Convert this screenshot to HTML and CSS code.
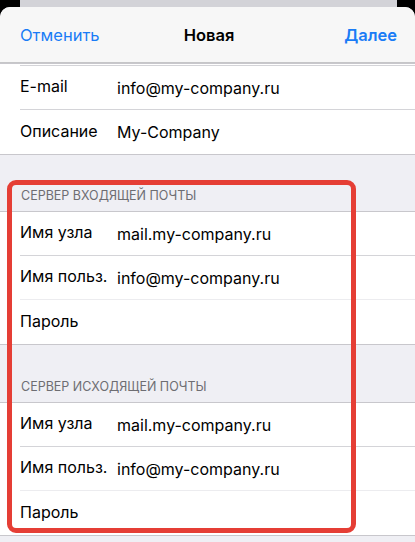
FILE: index.html
```html
<!DOCTYPE html>
<html lang="ru">

<head>
    <meta charset="UTF-8">
    <meta name="viewport" content="width=device-width, initial-scale=1.0">
    <title>Новая учётная запись</title>
    <link rel="stylesheet" href="styles.css">
</head>

<body>
    <div class="back"></div>

    <div class="sheet">
        <div class="nav">
            <span class="nav-btn">Отменить</span>
            <span class="nav-title">Новая</span>
            <span class="nav-btn nav-done">Далее</span>
        </div>

        <div class="group">
            <div class="row row-cut"><div class="row-inner"></div></div>
            <div class="row">
                <div class="row-inner">
                    <span class="label">E-mail</span>
                    <span class="value">info@my-company.ru</span>
                </div>
            </div>
            <div class="row">
                <div class="row-inner">
                    <span class="label">Описание</span>
                    <span class="value">My-Company</span>
                </div>
            </div>
        </div>

        <div class="section-head">Сервер входящей почты</div>
        <div class="group">
            <div class="row">
                <div class="row-inner">
                    <span class="label">Имя узла</span>
                    <span class="value">mail.my-company.ru</span>
                </div>
            </div>
            <div class="row">
                <div class="row-inner light">
                    <span class="label">Имя польз.</span>
                    <span class="value">info@my-company.ru</span>
                </div>
            </div>
            <div class="row">
                <div class="row-inner">
                    <span class="label">Пароль</span>
                </div>
            </div>
        </div>

        <div class="section-head second">Сервер исходящей почты</div>
        <div class="group">
            <div class="row">
                <div class="row-inner">
                    <span class="label">Имя узла</span>
                    <span class="value">mail.my-company.ru</span>
                </div>
            </div>
            <div class="row">
                <div class="row-inner light">
                    <span class="label">Имя польз.</span>
                    <span class="value">info@my-company.ru</span>
                </div>
            </div>
            <div class="row">
                <div class="row-inner">
                    <span class="label">Пароль</span>
                </div>
            </div>
        </div>
    </div>

    <!-- выделение -->
    <div class="mark"></div>
</body>

</html>
```

FILE: styles.css
```css
body {
    margin: 0;
    padding: 0;
    width: 415px;
    height: 542px;
    overflow: hidden;
    position: relative;
    background: #000;
    font-family: Inter, "Liberation Sans", "Noto Sans", sans-serif;
    color: #000;
}

.back {
    height: 7px;
    margin: 0 18px 0 20px;
    background: #d3d3d8;
}

.sheet {
    background: #efeff4;
    border-radius: 10px 10px 0 0;
    overflow: hidden;
    height: 535px;
}

.nav {
    height: 55px;
    background: #f7f7f7;
    border-bottom: 1px solid #c6c6c8;
    display: grid;
    grid-template-columns: 1fr auto 1fr;
    align-items: center;
    padding: 0 18px 0 20px;
    font-size: 16.5px;
}

.nav-btn {
    color: #1a7cf6;
}

.nav-title {
    font-weight: 600;
    padding-left: 1px;
}

.nav-done {
    font-weight: 600;
    text-align: right;
}

.group {
    background: #fff;
    border-top: 1px solid #c8c7cc;
    border-bottom: 1px solid #c8c7cc;
}

.group:first-of-type {
    border-top: 0;
}

.row {
    padding-left: 20px;
}

.row-inner {
    height: 43px;
    border-bottom: 1px solid #d4d4d8;
    display: flex;
    align-items: center;
    font-size: 16px;
}

.row-inner.light {
    border-bottom-color: #ececef;
}

.row:last-child .row-inner {
    border-bottom: 0;
    height: 44px;
}

.row-cut .row-inner {
    height: 1px;
}

.label {
    width: 97px;
    flex-shrink: 0;
    margin-top: -3px;
}

.section-head {
    height: 56px;
    box-sizing: border-box;
    padding: 0 0 8px 21px;
    display: flex;
    align-items: flex-end;
    font-size: 12.5px;
    text-transform: uppercase;
    color: #6d6d72;
}

.section-head.second {
    height: 57px;
}

.mark {
    position: absolute;
    left: 7px;
    top: 180px;
    width: 339px;
    height: 343px;
    border: 5px solid #e53e35;
    border-radius: 9px;
}
```
